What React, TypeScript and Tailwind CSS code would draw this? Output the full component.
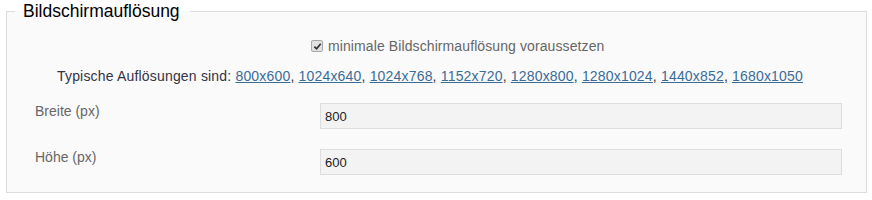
import React from 'react';

const RESOLUTIONS = [
  '800x600',
  '1024x640',
  '1024x768',
  '1152x720',
  '1280x800',
  '1280x1024',
  '1440x852',
  '1680x1050',
];

const FIELDS = [
  { label: 'Breite (px)', value: '800' },
  { label: 'Höhe (px)', value: '600' },
];

export default function App() {
  return (
    <div className="h-[200px] bg-white pl-[6px] font-['Liberation_Sans',Arial,sans-serif] text-[14px] leading-5">
      <fieldset className="w-[861px] border border-[#dddddd] bg-[#fafafa] pb-[17px]">
        <legend className="ml-2 pl-2 pr-[10px] text-[17.5px] leading-[22px] text-black">
          Bildschirmauflösung
        </legend>

        <div className="mt-[14px] flex items-center pl-[304px] tracking-[0.1px] text-[#666666]">
          <span className="mr-[5px] flex h-[12px] w-[12px] items-center justify-center rounded-[2px] border border-[#a8a8a8] bg-[#e2e2e2]">
            <svg viewBox="0 0 10 10" className="h-[9px] w-[9px]">
              <path d="M1.5 5.2 L4 7.6 L8.6 2" fill="none" stroke="#333" strokeWidth={1.9} />
            </svg>
          </span>
          <span>minimale Bildschirmauflösung voraussetzen</span>
        </div>

        <div className="mt-[10px] pl-[50px] tracking-[0.18px] text-[#333344]">
          Typische Auflösungen sind:{' '}
          {RESOLUTIONS.map((r, i) => (
            <React.Fragment key={r}>
              <a href="#" className="text-[#3a6c98] underline">
                {r}
              </a>
              {i < RESOLUTIONS.length - 1 && ', '}
            </React.Fragment>
          ))}
        </div>

        <div className="mt-[15px] flex flex-col gap-[18px]">
          {FIELDS.map((f) => (
            <div key={f.label} className="flex items-start">
              <label className="w-[313px] pl-[28px] text-[#666666]">{f.label}</label>
              <input
                readOnly
                value={f.value}
                className="mt-[2px] h-[26px] w-[522px] border border-[#dddddd] bg-[#f3f3f3] px-[4px] text-[13px] text-[#222222] outline-none"
              />
            </div>
          ))}
        </div>
      </fieldset>
    </div>
  );
}
